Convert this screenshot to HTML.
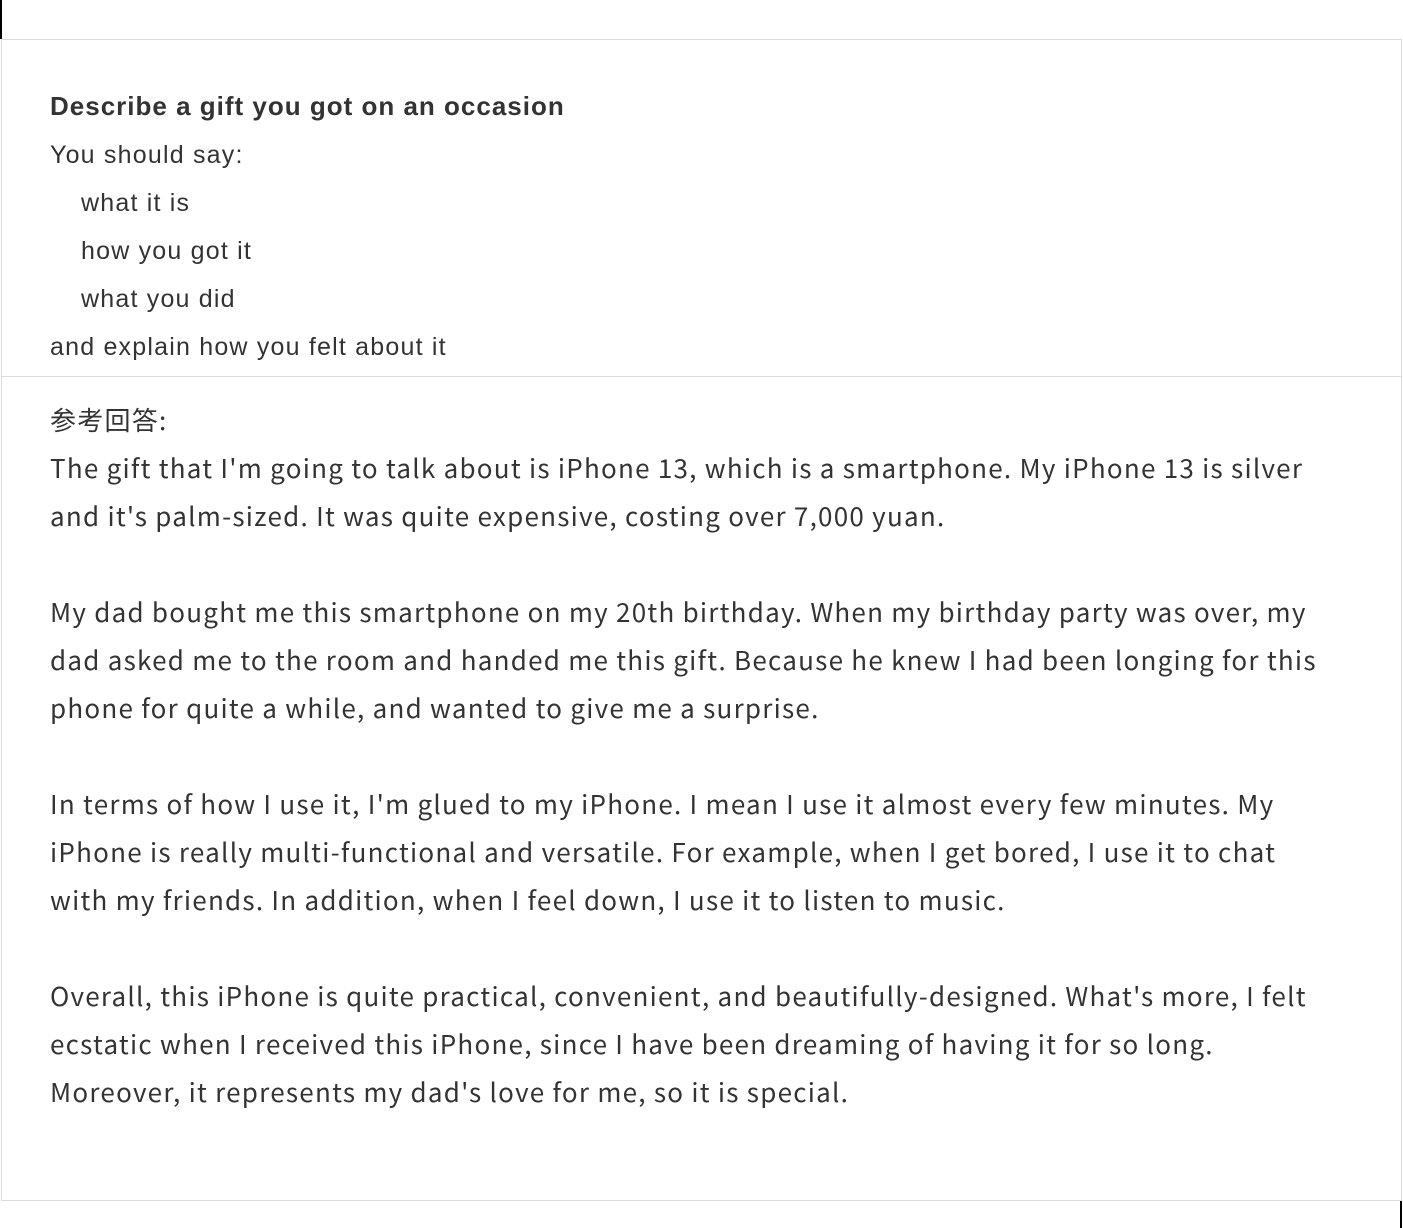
<!DOCTYPE html>
<html><head><meta charset="utf-8"><style>
html,body{margin:0;padding:0;background:#fff;width:1403px;height:1228px;overflow:hidden;position:relative}
.bl{position:absolute;left:0;top:0;width:2px;height:39px;background:#000}
.br{position:absolute;left:1400px;top:1200px;width:2px;height:28px;background:#000}
.tbl{position:absolute;left:1px;top:39px;width:1399px;border:1px solid #dcdcdc}
.c1{padding:42px 0 5px 48px;font-family:"Liberation Sans",Arial,sans-serif;font-size:25px;line-height:48px;color:#333;border-bottom:1px solid #dcdcdc;letter-spacing:1.2px}
.c1 b{font-size:26px;letter-spacing:1px}
.c1 .i{padding-left:31px}
.c2{padding:19px 0 84px 48px;font-family:"Noto Sans CJK SC","Liberation Sans",sans-serif;font-size:26px;line-height:48px;color:#333;white-space:nowrap;letter-spacing:1.25px}
</style></head><body>
<div class="bl"></div><div class="br"></div>
<div class="tbl">
<div class="c1"><b>Describe a gift you got on an occasion</b><br>You should say:<br><span class="i">what it is</span><br><span class="i">how you got it</span><br><span class="i">what you did</span><br>and explain how you felt about it</div>
<div class="c2">参考回答:<br>The gift that I'm going to talk about is iPhone 13, which is a smartphone. My iPhone 13 is silver<br>and it's palm-sized. It was quite expensive, costing over 7,000 yuan.<br><br>My dad bought me this smartphone on my 20th birthday. When my birthday party was over, my<br>dad asked me to the room and handed me this gift. Because he knew I had been longing for this<br>phone for quite a while, and wanted to give me a surprise.<br><br>In terms of how I use it, I'm glued to my iPhone. I mean I use it almost every few minutes. My<br>iPhone is really multi-functional and versatile. For example, when I get bored, I use it to chat<br>with my friends. In addition, when I feel down, I use it to listen to music.<br><br>Overall, this iPhone is quite practical, convenient, and beautifully-designed. What's more, I felt<br>ecstatic when I received this iPhone, since I have been dreaming of having it for so long.<br>Moreover, it represents my dad's love for me, so it is special.</div>
</div>
</body></html>
